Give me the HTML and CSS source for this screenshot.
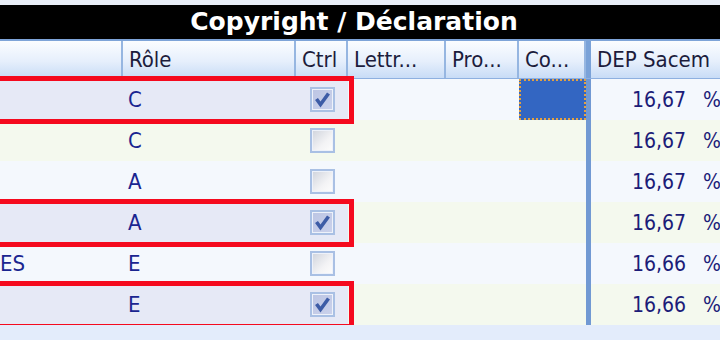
FILE: index.html
```html
<!DOCTYPE html>
<html lang="fr">
<head>
  <meta charset="UTF-8">
  <title>Copyright / Déclaration</title>
  <link rel="stylesheet" href="styles.css">
</head>
<body>
  <div class="top-strip"></div>
  <div class="title-bar">Copyright / Déclaration</div>

  <div class="grid">
    <div class="row head">
      <div class="cell"></div>
      <div class="cell">Rôle</div>
      <div class="cell">Ctrl</div>
      <div class="cell">Lettr...</div>
      <div class="cell">Pro...</div>
      <div class="cell">Co...</div>
      <div class="split"></div>
      <div class="cell">DEP Sacem</div>
    </div>

    <div class="row odd picked">
      <span class="mark"></span>
      <div class="cell"></div>
      <div class="cell">C</div>
      <div class="cell ctrl"><span class="cb checked"><svg viewBox="0 0 21 21"><path d="M4.5 10 L8.5 15.5 L16.5 4.5"/></svg></span></div>
      <div class="cell"></div>
      <div class="cell"></div>
      <div class="cell current"></div>
      <div class="split"></div>
      <div class="cell num">16,67 %</div>
    </div>

    <div class="row even">
      <div class="cell"></div>
      <div class="cell">C</div>
      <div class="cell ctrl"><span class="cb"></span></div>
      <div class="cell"></div>
      <div class="cell"></div>
      <div class="cell"></div>
      <div class="split"></div>
      <div class="cell num">16,67 %</div>
    </div>

    <div class="row odd">
      <div class="cell"></div>
      <div class="cell">A</div>
      <div class="cell ctrl"><span class="cb"></span></div>
      <div class="cell"></div>
      <div class="cell"></div>
      <div class="cell"></div>
      <div class="split"></div>
      <div class="cell num">16,67 %</div>
    </div>

    <div class="row even picked">
      <span class="mark"></span>
      <div class="cell"></div>
      <div class="cell">A</div>
      <div class="cell ctrl"><span class="cb checked"><svg viewBox="0 0 21 21"><path d="M4.5 10 L8.5 15.5 L16.5 4.5"/></svg></span></div>
      <div class="cell"></div>
      <div class="cell"></div>
      <div class="cell"></div>
      <div class="split"></div>
      <div class="cell num">16,67 %</div>
    </div>

    <div class="row odd">
      <div class="cell name">ES</div>
      <div class="cell">E</div>
      <div class="cell ctrl"><span class="cb"></span></div>
      <div class="cell"></div>
      <div class="cell"></div>
      <div class="cell"></div>
      <div class="split"></div>
      <div class="cell num">16,66 %</div>
    </div>

    <div class="row even picked">
      <span class="mark"></span>
      <div class="cell"></div>
      <div class="cell">E</div>
      <div class="cell ctrl"><span class="cb checked"><svg viewBox="0 0 21 21"><path d="M4.5 10 L8.5 15.5 L16.5 4.5"/></svg></span></div>
      <div class="cell"></div>
      <div class="cell"></div>
      <div class="cell"></div>
      <div class="split"></div>
      <div class="cell num">16,66 %</div>
    </div>
  </div>
</body>
</html>
```

FILE: styles.css
```css
/* Reset */
* {
  margin: 0;
  padding: 0;
  box-sizing: border-box;
}

body {
  width: 720px;
  height: 340px;
  overflow: hidden;
  background-color: #e3ecfb;
  font-family: "DejaVu Sans Condensed", "DejaVu Sans", sans-serif;
  font-stretch: condensed;
  font-size: 22px;
  color: #1a2590;
}

.top-strip {
  height: 5px;
  background-color: #e9eef8;
}

/* Black caption above the grid */
.title-bar {
  height: 34px;
  line-height: 34px;
  padding-right: 12px;
  background-color: #000;
  color: #fff;
  text-align: center;
  font-family: "DejaVu Sans", sans-serif;
  font-stretch: normal;
  font-weight: bold;
  font-size: 25px;
  white-space: nowrap;
}

.grid {
  width: 720px;
  overflow: hidden;
}

.row {
  display: grid;
  grid-template-columns: 123px 173px 52px 98px 73px 67px 5px 169px;
  height: 41px;
  position: relative;
}

.cell {
  display: flex;
  align-items: center;
  padding-left: 5px;
  white-space: nowrap;
  overflow: hidden;
}

.split {
  background-color: #7199d3;
}

/* Column headers */
.row.head {
  height: 40px;
  border-top: 2px solid #7ea4d8;
  border-bottom: 1px solid #8eb0e0;
  color: #1c1c3c;
}

.row.head .cell {
  padding-left: 6px;
  background: linear-gradient(#fbfdff, #e6effc 55%, #c8dcf6);
  border-right: 2px solid #96b6e1;
}

.row.head .split {
  background-color: #7aa2d8;
}

/* Body rows */
.row.odd .cell {
  background-color: #f4f8fd;
}

.row.even .cell {
  background-color: #f4f9ee;
}

.row.picked .cell:nth-of-type(-n+3) {
  background-color: #e6e9f6;
}

.cell.name {
  padding-left: 0;
}

.cell.ctrl {
  justify-content: center;
  padding-left: 0;
}

.row .cell.current {
  background-color: #3366c2;
  outline: 2px dotted #e3a140;
  outline-offset: -2px;
}

.cell.num {
  padding-left: 41px;
  font-size: 21px;
  word-spacing: 11px;
  color: #1c1c78;
}

/* Checkboxes */
.cb {
  display: block;
  width: 25px;
  height: 25px;
  border: 2px solid #a9c0e4;
  box-shadow: inset 0 0 0 1px #eef2fa;
  background: linear-gradient(135deg, #cfd3dc, #f3f3f5 60%, #fdfdfd);
}

.cb.checked {
  background: linear-gradient(135deg, #bcc5e3, #cbd2ec);
}

.cb svg {
  display: block;
  width: 21px;
  height: 21px;
}

.cb svg path {
  fill: none;
  stroke: #3d5ca6;
  stroke-width: 3.6;
}

/* Red annotation frames */
.mark {
  position: absolute;
  left: -10px;
  top: -3px;
  width: 364px;
  height: 48px;
  border: 5px solid #f50a1e;
  z-index: 2;
  pointer-events: none;
}
```
